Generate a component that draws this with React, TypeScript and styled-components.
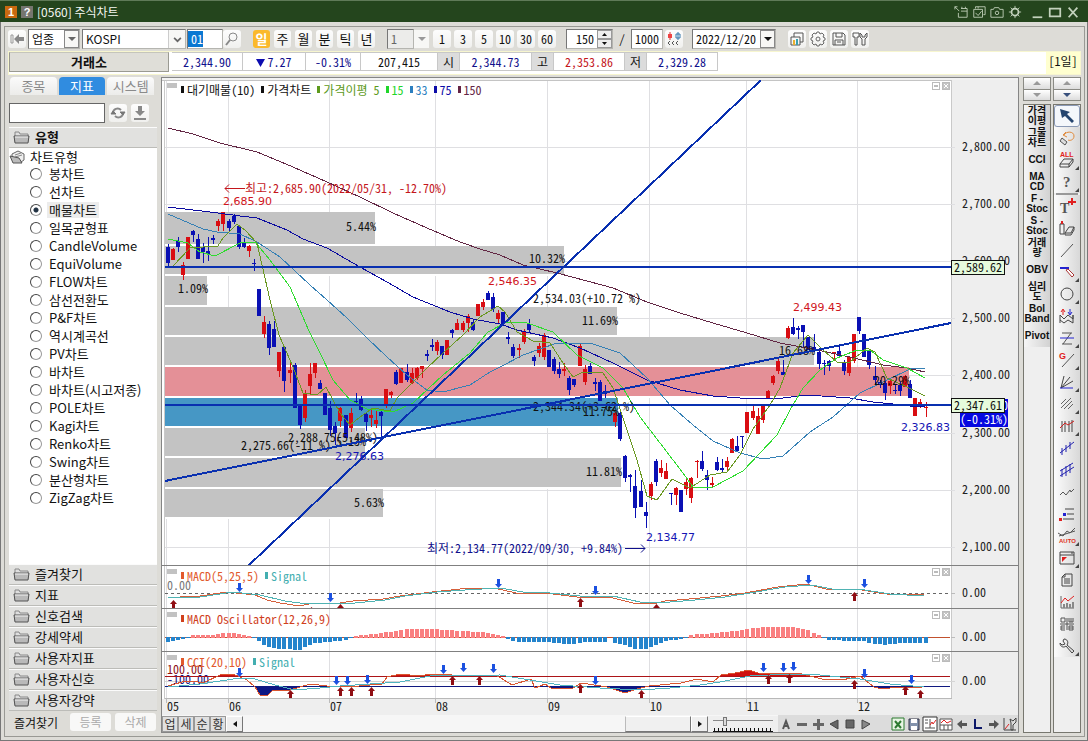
import React from 'react';
import styled, { createGlobalStyle, css } from 'styled-components';

const MONO = '"Noto Sans Mono CJK KR", "Noto Sans CJK KR", monospace';
const SANS = '"Noto Sans CJK KR", "Noto Sans", sans-serif';

const GlobalStyle = createGlobalStyle`
  *, *::before, *::after { box-sizing: border-box; }
  html, body { margin: 0; }
  body { background: #dddcd7; font-family: ${SANS}; font-size: 13px; color: #111; }
  button, input, select { font: inherit; color: inherit; margin: 0; padding: 0; border-radius: 0; }
  button { cursor: pointer; }
`;

/* ---------- window ---------- */

const Window = styled.div`
  min-height: 100vh;
  min-width: 1060px;
  display: flex;
  flex-direction: column;
  background: #dddcd7;
  box-shadow: inset 1px 0 #777, inset -1px -1px #777;
`;

const TitleBar = styled.header`
  height: 22px;
  margin-bottom: 4px;
  padding: 0 8px 0 5px;
  display: flex;
  align-items: center;
  gap: 4px;
  background: #24451d;
  border-top: 1px solid #5f7a58;
  color: #f4f6f2;
`;

const TitleBadge = styled.span<{ $bg: string }>`
  width: 12px;
  height: 12px;
  background: ${(p) => p.$bg};
  color: #fff;
  font: bold 11px/12px "Liberation Sans", sans-serif;
  text-align: center;
`;

const Title = styled.h1`
  flex: 1;
  margin: 0;
  font: 12px/20px ${SANS};
`;

const TitleButton = styled.button`
  width: 14px;
  height: 16px;
  border: 0;
  background: none;
  color: #c3d2bd;
  svg { display: block; width: 14px; height: 14px; }
`;

const TitleGroup = styled.div`
  display: flex;
  gap: 4px;
  margin-left: 4px;
`;

const Client = styled.div`
  flex: 1;
  margin: 0 3px 4px 4px;
  padding: 0 3px 3px;
  border: 1px solid #999994;
  display: flex;
  flex-direction: column;
`;

/* ---------- toolbar ---------- */

const Toolbar = styled.div`
  height: 24px;
  display: flex;
  align-items: center;
  font: 12px/16px ${MONO};
`;

const ButtonGroup = styled.div<{ $gap: number; $left?: number }>`
  display: flex;
  gap: ${(p) => p.$gap}px;
  margin-left: ${(p) => p.$left ?? 0}px;
`;

const ToolButton = styled.button<{ $on?: boolean }>`
  width: 18px;
  height: 18px;
  border: 0;
  border-radius: 3px;
  background: linear-gradient(#fdfdfd, #f0f0ee);
  color: #111;
  font: 12px/18px ${MONO};
  display: flex;
  align-items: center;
  justify-content: center;
  svg { width: 16px; height: 16px; flex: none; }
  ${(p) => p.$on && css`background: #fbb92c; color: #fff; font-weight: bold;`}
`;

const PeriodButton = styled(ToolButton)`
  width: 17px;
  font-size: 13px;
`;

const Field = styled.span<{ $w: number; $left?: number }>`
  width: ${(p) => p.$w}px;
  height: 20px;
  margin-left: ${(p) => p.$left ?? 0}px;
  display: flex;
  align-items: center;
  background: #fff;
  border: 1px solid #777;
  border-right-color: #b5b5b0;
  border-bottom-color: #b5b5b0;
`;

const FieldInput = styled.input<{ $right?: boolean; $marked?: boolean; $sans?: boolean }>`
  flex: 1;
  min-width: 0;
  width: 100%;
  height: 16px;
  padding: 0 3px;
  border: 0;
  outline: 0;
  background: ${(p) => (p.$marked ? 'linear-gradient(to right, #0a78d2 15px, #fff 15px)' : 'none')};
  color: ${(p) => (p.$marked ? '#fff' : '#111')};
  font: 12px/16px ${(p) => (p.$sans ? SANS : MONO)};
  text-align: ${(p) => (p.$right ? 'right' : 'left')};
`;

const PlainSelect = styled.select<{ $muted?: boolean }>`
  flex: 1;
  min-width: 0;
  height: 18px;
  padding: 0 3px;
  border: 0;
  outline: 0;
  appearance: none;
  background: ${(p) => (p.$muted ? '#ececea' : 'none')};
  color: ${(p) => (p.$muted ? '#666' : '#111')};
  font: 12px/16px ${MONO};
`;

const Drop = styled.span<{ $framed?: boolean }>`
  width: 15px;
  height: 18px;
  flex: none;
  display: flex;
  align-items: center;
  justify-content: center;
  background: #f7f7f5;
  border: ${(p) => (p.$framed ? '1px solid #888' : '0')};
  svg { width: 8px; height: 4px; }
`;

const ComboDrop = styled(Drop)`
  width: 17px;
  border-left: 1px solid #ccc;
  svg { width: 9px; height: 9px; }
`;

const Spin = styled.span`
  width: 15px;
  height: 18px;
  display: flex;
  flex-direction: column;
  button {
    flex: 1;
    border: 1px solid #999;
    background: #eee;
    font-size: 0;
    display: flex;
    align-items: center;
    justify-content: center;
  }
  svg { width: 5px; height: 3px; }
`;

const Slash = styled.span`
  width: 18px;
  text-align: center;
`;

/* ---------- quote strip ---------- */

const QuoteStrip = styled.div`
  height: 24px;
  margin-bottom: 2px;
  display: flex;
  background: #fff;
  border: 1px solid #f7f6cf;
  font: 12px/18px ${MONO};
`;

const MarketButton = styled.button`
  width: 160px;
  height: 20px;
  margin-right: 3px;
  border: 1px solid #9a9a92;
  border-top-color: #c5c5bb;
  background: #dfded8;
  font: bold 13px/18px ${SANS};
`;

const QuoteCell = styled.span<{ $w: number; $tone?: string; $label?: boolean }>`
  width: ${(p) => p.$w}px;
  height: 19px;
  border: 1px solid #c8c8c8;
  border-left-width: 0;
  background: ${(p) => (p.$label ? '#dcdcdc' : '#fff')};
  color: ${(p) => p.$tone ?? '#111'};
  text-align: center;
  white-space: nowrap;
  svg { width: 9px; height: 8px; margin-right: 2px; }
`;

const UnitTag = styled.span`
  width: 34px;
  margin-left: auto;
  background: #ffffcf;
  text-align: center;
`;

/* ---------- sidebar ---------- */

const Body = styled.div`
  flex: 1;
  display: flex;
`;

const Sidebar = styled.aside`
  width: 152px;
  flex: none;
  padding: 0 3px 0 1px;
  display: flex;
  flex-direction: column;
`;

const Tabs = styled.div`
  height: 18px;
  display: flex;
  gap: 2px;
  padding: 0 3px 0 1px;
`;

const Tab = styled.button<{ $on?: boolean }>`
  flex: 1;
  border: 0;
  border-radius: 4px 4px 0 0;
  background: ${(p) => (p.$on ? '#308ce0' : 'linear-gradient(#fbfbfb, #ececea)')};
  color: ${(p) => (p.$on ? '#fff' : '#8a8a8a')};
  font: 13px/18px ${SANS};
`;

const SearchRow = styled.div`
  display: flex;
  align-items: center;
  gap: 4px;
  margin: 8px 0 4px;
`;

const SearchInput = styled.input`
  width: 96px;
  height: 20px;
  padding: 0 4px;
  border: 1px solid #666;
  background: #fff;
`;

const GroupHeader = styled.button<{ $bold?: boolean }>`
  height: 21px;
  padding: 0 0 1px 4px;
  display: flex;
  align-items: center;
  gap: 5px;
  border: 0;
  border-top: 1px solid #fbfbfb;
  border-bottom: 1px solid #bcbcb8;
  background: #e1e1df;
  font: ${(p) => (p.$bold ? 'bold' : 'normal')} 13px/18px ${SANS};
  svg { width: 17px; height: 14px; }
`;

const Tree = styled.fieldset`
  flex: 1;
  min-width: 0;
  margin: 0;
  padding: 0;
  border: 0;
  background: #fff;
`;

const TreeRoot = styled.div`
  height: 17px;
  display: flex;
  align-items: center;
  gap: 5px;
  line-height: 18px;
  svg { width: 16px; height: 14px; }
`;

const TreeItem = styled.label`
  height: 18px;
  padding-left: 21px;
  display: flex;
  align-items: center;
  gap: 5px;
  line-height: 18px;
  white-space: nowrap;
`;

const Radio = styled.input`
  appearance: none;
  width: 12px;
  height: 12px;
  border: 1px solid #444;
  border-right-color: #999;
  border-bottom-color: #999;
  border-radius: 50%;
  background: #fff;
  &:checked { background: radial-gradient(#234 0 2px, #fff 3px); }
`;

const ItemText = styled.span<{ $on: boolean }>`
  padding: 0 2px;
  background: ${(p) => (p.$on ? '#ececec' : 'none')};
  line-height: 16px;
`;

const SideFoot = styled.div`
  height: 22px;
  display: flex;
  align-items: center;
  gap: 4px;
  padding: 0 1px 0 5px;
  font-size: 12px;
  span { flex: 1; white-space: nowrap; }
`;

const FootButton = styled.button`
  width: 41px;
  height: 18px;
  border: 0;
  border-radius: 3px;
  background: #f8f8f7;
  color: #aaa;
  font: 12px/18px ${SANS};
`;

/* ---------- chart ---------- */

const ChartFrame = styled.main`
  flex: 1;
  min-width: 0;
  margin: 0 4px 0 1px;
  padding-top: 2px;
  border: 1px solid #858585;
  background: #f2f2f2;
`;

const Pane = styled.section`
  position: relative;
`;

const Plot = styled.svg`
  display: block;
  width: 100%;
  height: auto;
  font: 12px ${MONO};
`;

const PaneTag = styled.span`
  position: absolute;
  left: 5px;
  top: 3px;
  width: 10px;
  height: 5px;
  background: #c2c2c2;
`;

const Legend = styled.div`
  position: absolute;
  left: 19px;
  top: 2px;
  display: flex;
  gap: 6px;
  font: 12px/15px ${MONO};
  white-space: pre;
`;

const LegendItem = styled.span<{ $c: string }>`
  display: flex;
  align-items: center;
  gap: 3px;
  color: ${(p) => p.$c};
  &::before { content: ''; width: 3px; height: 7px; background: ${(p) => p.$c}; }
`;

const PaneButtons = styled.div`
  position: absolute;
  right: 68px;
  top: 2px;
  display: flex;
  gap: 2px;
`;

const PaneButton = styled.button<{ $fill?: boolean }>`
  width: 8px;
  height: 8px;
  border: 1px solid #bbb;
  background: ${(p) => (p.$fill ? '#c4c4c4' : '#fff')};
  svg { display: block; width: 6px; height: 6px; }
`;

const BottomBar = styled.div`
  height: 17px;
  display: flex;
  align-items: center;
  background: #f6f6f6;
`;

const ModeButton = styled.button`
  width: 16px;
  height: 16px;
  border: 1px solid #999;
  background: #e0e0e0;
  color: #333;
  font: 12px/13px ${SANS};
  overflow: hidden;
`;

const ScrollButton = styled.button`
  width: 17px;
  height: 16px;
  border: 1px solid #fff;
  border-right-color: #777;
  border-bottom-color: #777;
  background: #efefef;
  display: flex;
  align-items: center;
  justify-content: center;
  svg { width: 4px; height: 6px; }
`;

const ScrollTrack = styled.div`
  flex: 1;
  height: 16px;
  display: flex;
  justify-content: flex-end;
  &::after {
    content: '';
    width: 66px;
    background: #f0f0f0;
    border: 1px solid #fff;
    border-left-color: #bbb;
    border-right-color: #777;
    border-bottom-color: #777;
  }
`;

const Zoom = styled.label`
  width: 70px;
  height: 16px;
  padding: 1px 5px 0;
  background: #efefef;
  svg { display: block; width: 60px; height: 6px; }
`;

const ZoomRange = styled.input`
  appearance: none;
  display: block;
  width: 60px;
  height: 9px;
  background: linear-gradient(#888, #888) 0 3px / 100% 1px no-repeat;
  &::-webkit-slider-thumb {
    appearance: none;
    width: 4px;
    height: 9px;
    background: #ddd;
    border: 1px solid #777;
  }
`;

const BottomTools = styled.div<{ $end?: boolean }>`
  height: 17px;
  display: flex;
  align-items: center;
  padding-right: ${(p) => (p.$end ? 0 : 16)}px;
  background: #dcdcdc;
`;

const BottomTool = styled.button`
  width: 16px;
  height: 16px;
  border: 0;
  background: none;
  svg { display: block; width: 16px; height: 16px; }
`;

/* ---------- right tool strips ---------- */

const Strip = styled.div`
  width: 28px;
  flex: none;
  display: flex;
  flex-direction: column;
  gap: 3px;
  & + & { margin-left: 2px; }
`;

const StripPager = styled.div`
  height: 24px;
  display: flex;
  flex-direction: column;
  border: 1px solid #8a8a84;
  button {
    flex: 1;
    border: 0;
    background: linear-gradient(#fff, #dcdcdc);
    display: flex;
    align-items: center;
    justify-content: center;
  }
  button + button { border-top: 1px solid #8a8a84; }
  svg { width: 8px; height: 4px; }
`;

const StripList = styled.div`
  flex: 1;
  display: flex;
  flex-direction: column;
  border: 1px solid #77776f;
  background: #efefef;
`;

const StripText = styled.button`
  height: 22px;
  border: 0;
  background: linear-gradient(to right, #f6f6f6, #d2d2d2);
  font: bold 10px/10px "Liberation Sans", ${SANS};
  white-space: pre;
  text-align: center;
`;

const StripIcon = styled.button<{ $on?: boolean }>`
  position: relative;
  height: 22px;
  border: ${(p) => (p.$on ? '1px solid #8a99b5' : '0')};
  border-radius: ${(p) => (p.$on ? 3 : 0)}px;
  background: ${(p) => (p.$on ? '#f4f7fb' : 'linear-gradient(to right, #fcfcfc, #d8d8d8)')};
  display: flex;
  align-items: center;
  justify-content: center;
  svg { width: 18px; height: 18px; }
`;

const Corner = styled.span`
  position: absolute;
  right: 1px;
  bottom: 1px;
  border: 2px solid transparent;
  border-right-color: #444;
  border-bottom-color: #444;
`;

const StripRule = styled.hr`
  width: 22px;
  height: 2px;
  margin: 0 auto;
  border: 0;
  background: #999;
`;

/* ---------- icons ---------- */

const Icon = ({ size = 16, children }: { size?: number; children: React.ReactNode }) => (
  <svg viewBox={`0 0 ${size} ${size}`} fill="none" stroke="currentColor" aria-hidden="true">{children}</svg>
);

const Tri = ({ dir, color = '#111' }: { dir: 'up' | 'down' | 'left' | 'right'; color?: string }) => {
  const d = { up: 'M0 8L4 0L8 8Z', down: 'M0 0H8L4 8Z', left: 'M8 0V8L0 4Z', right: 'M0 0L8 4L0 8Z' }[dir];
  return <svg viewBox="0 0 8 8" preserveAspectRatio="none" aria-hidden="true"><path d={d} fill={color} /></svg>;
};

const Folder = () => (
  <svg viewBox="0 0 17 14" aria-hidden="true">
    <path d="M2 12V2H6L7 4H15V12Z" fill="#dedede" stroke="#888" />
    <path d="M2 13L1 6H16L15 13Z" fill="#b9b9b9" stroke="#555" />
    <path d="M2 7H15" stroke="#f4f4f4" />
  </svg>
);

const OpenFolder = () => (
  <svg viewBox="0 0 16 14" aria-hidden="true">
    <path d="M3 8V4L9 1L15 4V10L12 12Z" fill="#eee" stroke="#666" />
    <path d="M6 5L12 3M6 7L13 5" stroke="#888" />
    <path d="M1 6L10 8L13 13H4Z" fill="#bbb" stroke="#555" />
  </svg>
);

const gear = 'M7 1H9L10 3L12 2L14 4L13 6L15 7V9L13 10L14 12L12 14L10 13L9 15H7L6 13L4 14L2 12L3 10L1 9V7L3 6L2 4L4 2L6 3Z';

/* ---------- chart data (chart units) ---------- */

// x, high, body top, body bottom, low, rising
type Candle = [number, number, number, number, number, 0 | 1];
const candles: Candle[] = [
  [168,244,247,263,267,0],[173,248,249,260,260,1],[178,237,241,247,252,0],[183,262,265,275,280,1],[188,237,237,259,259,1],
  [193,230,231,235,242,0],[198,234,239,259,259,0],[203,243,247,252,263,0],[208,237,251,254,261,0],[213,235,238,240,244,0],
  [218,219,221,226,231,1],[223,212,212,224,231,1],[229,219,221,228,231,0],[234,214,216,222,224,0],[239,225,226,247,249,0],
  [244,238,242,247,248,0],[249,245,246,251,257,1],[254,259,263,264,271,0],[259,289,289,316,316,0],[264,316,322,334,338,1],
  [269,321,324,348,355,0],[274,321,329,347,347,0],[279,352,352,371,377,1],[284,347,347,381,392,0],[290,362,370,373,383,1],
  [295,363,365,408,408,0],[300,406,406,425,429,0],[305,390,393,418,422,1],[310,363,374,386,395,1],[315,363,363,373,378,1],
  [320,380,383,389,389,0],[325,393,393,415,415,0],[330,401,408,430,436,0],[335,422,426,433,445,0],[340,407,408,421,427,1],
  [346,415,415,438,438,0],[351,408,413,428,432,1],[356,393,401,402,404,0],[361,396,399,410,411,0],[366,413,414,422,431,0],
  [371,410,415,418,427,1],[376,410,420,424,428,1],[381,411,412,416,438,0],[386,389,389,404,408,1],[391,391,392,395,398,1],
  [396,370,372,384,385,0],[401,368,368,383,383,1],[407,364,372,380,382,0],[412,368,373,383,384,1],[417,367,368,378,380,1],
  [422,366,366,369,378,1],[427,350,354,356,361,0],[432,339,345,347,351,0],[437,340,342,351,355,1],[442,346,346,355,359,0],
  [447,340,340,355,355,1],[452,329,330,333,338,0],[457,319,323,330,330,1],[463,321,323,330,332,1],[468,314,316,323,332,1],
  [473,320,322,330,331,0],[478,304,304,316,316,1],[483,299,302,307,310,1],[488,291,293,300,300,0],[493,293,297,309,312,0],
  [498,310,313,319,323,1],[503,312,312,324,324,0],[508,332,337,339,344,0],[513,344,347,356,358,0],[519,344,348,350,358,1],
  [524,329,332,342,344,1],[529,319,324,330,332,0],[534,355,357,361,366,0],[539,343,346,353,357,1],[544,333,335,357,360,1],
  [549,350,350,367,367,0],[554,357,359,371,374,0],[559,362,369,374,378,0],[564,363,369,371,376,1],[569,376,378,390,395,0],
  [574,379,379,385,387,0],[580,343,346,366,366,1],[585,365,369,382,385,1],[590,363,366,374,374,0],[595,378,382,384,391,0],
  [600,380,382,401,401,0],[605,385,391,394,398,0],[615,412,413,422,427,1],[620,410,413,439,441,0],
  [625,455,456,478,482,0],[630,474,475,477,492,0],[635,470,486,508,518,0],[641,480,491,507,507,0],[646,502,512,516,528,0],
  [651,482,484,496,500,1],[656,459,461,482,486,0],[661,460,468,473,477,1],[666,463,471,479,479,1],[671,493,493,494,505,0],
  [676,487,488,495,505,1],[681,490,490,512,512,0],[686,478,482,489,495,1],[691,477,478,498,503,1],[697,460,461,462,478,1],
  [702,451,461,469,471,0],[707,470,475,480,490,0],[712,477,483,485,487,1],[717,457,462,470,471,0],[722,459,468,470,472,0],
  [727,457,461,467,471,1],[732,438,439,453,453,1],[737,436,446,451,451,0],[742,436,436,437,448,0],[747,412,412,433,433,1],
  [753,405,411,418,420,1],[758,408,416,434,434,1],[763,405,405,420,423,1],[768,390,391,399,399,1],[773,375,376,383,385,1],
  [778,358,361,371,374,1],[783,360,372,375,375,0],[788,326,328,338,339,1],[793,318,327,334,335,0],[798,326,328,330,339,0],
  [803,325,325,332,348,0],[808,337,337,350,350,0],[814,334,347,350,352,0],[819,348,352,364,369,0],[824,360,363,364,375,0],
  [829,360,361,366,371,0],[834,352,352,354,359,1],[839,346,351,356,356,0],[844,360,362,371,375,0],[849,356,357,373,376,1],
  [854,334,334,361,363,1],[859,317,317,331,334,0],[864,334,334,357,357,0],[869,351,351,365,369,0],[875,366,376,380,385,0],
  [880,380,382,385,388,0],[885,381,383,393,400,0],[890,380,381,386,394,1],[895,385,390,391,394,0],[900,382,385,391,396,0],
  [905,375,376,387,387,1],[910,380,384,398,398,0],[915,398,398,416,416,1],[920,399,402,405,408,1],[926,402,407,408,417,1],
];

const averages: { color: string; points: string }[] = [
  { color: '#622744', points: '168,128 193,134 220,143 257,152 293,167 327,182 360,197 393,213 427,228 460,242 480,249 500,255 523,265 557,273 587,281 613,288 647,302 680,313 713,323 747,333 780,343 817,350 850,357 883,365 907,368 925,372' },
  { color: '#0b0ba0', points: '168,207 210,212 240,216 257,218 287,230 303,239 327,248 360,267 387,282 413,297 450,312 473,319 500,324 517,330 553,338 580,348 613,363 647,380 680,390 713,396 740,398 783,398 807,395 850,398 873,402 893,404 910,406 925,407' },
  { color: '#3580b5', points: '168,214 203,229 217,232 240,234 257,242 280,257 310,285 327,300 347,318 367,338 387,357 407,375 427,390 443,392 470,385 490,372 500,367 523,355 557,343 590,343 620,353 647,378 670,405 693,425 713,441 740,453 763,459 783,456 810,432 833,417 860,393 883,382 910,369 925,368' },
  { color: '#2fdc2f', points: '168,239 188,243 200,252 215,256 240,243 255,242 270,260 290,287 309,331 320,353 333,380 350,400 367,409 393,412 413,403 443,375 470,353 488,332 507,322 527,323 553,332 577,355 603,368 623,388 640,417 660,443 683,473 693,487 713,487 743,471 760,453 777,435 790,410 803,388 820,370 837,358 857,350 870,350 883,360 907,368 925,378' },
  { color: '#699820', points: '173,266 190,248 203,247 218,246 223,238 237,224 245,230 257,243 270,300 279,335 293,367 303,393 317,395 326,387 340,413 350,425 360,417 373,408 390,411 397,398 410,385 427,368 443,353 463,335 480,317 498,306 505,312 517,332 533,341 550,343 563,363 573,377 583,372 603,373 613,388 623,418 637,460 647,496 657,500 672,479 690,488 710,475 727,472 740,455 753,429 770,405 780,388 793,353 808,335 823,350 837,362 850,362 867,348 875,352 887,378 907,387 925,396' },
];

const volumeBands: { y: number; end: number; label: string; color?: string; labelY?: number; h?: number }[] = [
  { y: 212, end: 375, label: '5.44%', h: 32, labelY: 231 },
  { y: 246, end: 564, label: '10.32%', labelY: 263 },
  { y: 276, end: 207, label: '1.09%', h: 29, labelY: 293 },
  { y: 307, end: 617, label: '11.69%' },
  { y: 337, end: 814, label: '16.68%' },
  { y: 367, end: 909, label: '20.29%', color: '#e49097', h: 29 },
  { y: 398, end: 618, label: '11.75%', color: '#4697c5' },
  { y: 428, end: 365, label: '5.13%' },
  { y: 458, end: 621, label: '11.81%', h: 29 },
  { y: 489, end: 383, label: '5.63%' },
];

const months: [number, string][] = [[166, '05'], [228, '06'], [329, '07'], [435, '08'], [547, '09'], [649, '10'], [746, '11'], [857, '12']];
const prices = [2800, 2700, 2600, 2500, 2400, 2300, 2200, 2100];

const oscillator: [number, number][] = [
  [168,-4],[178,-2],[185,-1],[192,2],[210,2],[225,4],[235,4],[250,1],[256,-1],[262,-6],[272,-10],[285,-11],[300,-12],[305,-9],[315,-5],
  [330,-4],[345,-2],[355,1],[375,3],[395,6],[410,8],[435,8],[460,6],[480,5],[500,2],[507,-1],[515,-4],[545,-4],[570,-6],[590,-4],[610,-4],
  [625,-7],[635,-11],[648,-11],[658,-6],[670,-2],[685,-1],[690,2],[715,4],[735,6],[750,9],[775,10],[795,10],[810,6],[822,1],[828,-2],
  [850,-3],[862,-3],[870,-5],[885,-7],[900,-5],[926,-5],
];

const oscillatorAt = (x: number) => {
  const i = Math.max(1, oscillator.findIndex(([px]) => px >= x));
  const [x0, v0] = oscillator[i - 1];
  const [x1, v1] = oscillator[i];
  return Math.round(v0 + ((v1 - v0) * (x - x0)) / (x1 - x0));
};

const macd = '168,598 180,597 200,596 227,592 255,595 267,600 280,603 300,606 313,603 340,603 353,601 383,599 400,596 432,592 460,589 494,588 516,593 545,593 577,597 609,597 633,603 653,604 665,601 689,599 721,596 745,593 778,587 806,584 826,589 862,590 886,594 924,595';
const macdSignal = '168,598 200,597 233,592 260,595 285,601 307,604 325,603 345,604 385,600 405,596 437,592 465,590 500,588 523,592 550,593 580,596 613,596 640,602 658,603 695,600 725,597 750,593 785,587 812,585 832,589 865,590 890,594 924,596';
const cci = '168,686 182,682 193,681 203,683 220,675 233,674 247,680 255,687 260,695 267,696 273,690 290,690 310,684 327,686 347,687 382,684 387,677 400,674 420,676 430,674 452,675 496,675 512,685 531,679 535,688 545,684 551,688 573,688 581,683 607,687 625,693 637,689 649,686 681,683 697,679 713,682 721,675 735,673 749,670 758,673 802,674 822,679 842,680 860,676 874,687 882,689 898,687 922,688';
const cciSignal = '168,687 200,684 240,678 255,679 275,685 295,690 320,688 340,686 370,684 400,682 430,676 500,675 530,680 560,685 600,688 640,690 670,688 700,685 720,682 750,676 790,674 820,675 860,679 890,684 924,687';

type Marks = { down: [number, number][]; up: [number, number][] };
const macdMarks: Marks = {
  down: [[239,588],[330,598],[498,584],[595,591],[808,580],[864,584]],
  up: [[173,604],[311,611],[340,608],[580,602],[656,608],[854,596]],
};
const cciMarks: Marks = {
  down: [[239,673],[336,681],[347,681],[367,680],[443,670],[463,668],[493,669],[595,681],[763,668],[783,668],[793,667],[864,674],[911,680]],
  up: [[290,694],[340,691],[351,691],[371,691],[452,680],[479,680],[580,688],[641,694],[768,679],[789,678],[854,684],[905,690],[920,694]],
};

/* ---------- chart parts ---------- */

const LEFT = 162;
const WIDTH = 856;
const EDGE = 951;

const Backdrop = ({ y, h }: { y: number; h: number }) => (
  <g shapeRendering="crispEdges">
    <rect x={LEFT} y={y} width={EDGE - LEFT} height={h} fill="#fff" />
    <rect x={EDGE} y={y} width="67" height={h} fill="#eeeeee" />
    {months.map(([x]) => <rect key={x} x={x} y={y} width="1" height={h} fill="#dfdfe2" />)}
    <rect x={EDGE} y={y} width="1" height={h} fill="#c9c9c9" />
    <rect x="164" y={y} width="1" height={h} fill="#c9c9c9" />
  </g>
);

const Rule = ({ y }: { y: number }) => <rect x={LEFT} y={y} width={WIDTH} height="1" fill="#808080" shapeRendering="crispEdges" />;

const SignalMarks = ({ down, up }: Marks) => (
  <g>
    {down.map(([x, y]) => <path key={`d${x}`} d={`M${x - 1} ${y - 5}h3v5h2l-3.5 4l-3.5-4h2z`} fill="#1b50e0" />)}
    {up.map(([x, y]) => <path key={`u${x}`} d={`M${x - 1} ${y + 5}h3v-5h2l-3.5-4l-3.5 4h2z`} fill="#8f0d12" />)}
  </g>
);

const PaneChrome = ({ items }: { items: [string, string][] }) => (
  <>
    <PaneTag />
    <Legend>{items.map(([c, t]) => <LegendItem key={t} $c={c}>{t}</LegendItem>)}</Legend>
    <PaneButtons>
      <PaneButton aria-label="Restore pane"><svg viewBox="0 0 6 6" aria-hidden="true"><rect x="1" y="2" width="4" height="2" fill="#bbb" /></svg></PaneButton>
      <PaneButton $fill aria-label="Close pane"><svg viewBox="0 0 6 6" aria-hidden="true"><path d="M1 1L5 5M5 1L1 5" stroke="#fff" /></svg></PaneButton>
    </PaneButtons>
  </>
);

const PriceTag = ({ y, text }: { y: number; text: string }) => (
  <g>
    <rect x="951.5" y={y - 6.5} width="53" height="14" fill="#e6fbdc" stroke="#111" />
    <text x="954" y={y + 5} fill="#111">{text}</text>
  </g>
);

const PricePane = () => (
  <Pane>
    <Plot viewBox={`${LEFT} 80 ${WIDTH} 486`} role="img" aria-label="KOSPI price chart">
      <Backdrop y={80} h={486} />
      <g shapeRendering="crispEdges">
        <rect x={LEFT} y="80" width={EDGE - LEFT} height="1" fill="#c4c4c4" />
        {prices.map((p, i) => <rect key={p} x="165" y={Math.round(147 + i * 57.1)} width="790" height="1" fill="#dfdfe2" />)}
        {volumeBands.map((b) => <rect key={b.y} x="165" y={b.y} width={b.end - 165} height={b.h ?? 28} fill={b.color ?? '#c3c3c3'} />)}
        {volumeBands.map((b) => <rect key={b.y} x="165" y={b.y + (b.h ?? 28)} width={b.end - 165} height="2" fill="#fff" />)}
      </g>
      <g shapeRendering="crispEdges">
        {candles.map(([x, hi, top, bot, lo, rising]) => (
          <g key={x} fill={rising ? '#d90d12' : '#0a10b4'}>
            <rect x={x} y={hi} width="1" height={Math.max(1, lo - hi)} />
            <rect x={x - 2} y={top} width="4" height={Math.max(1, bot - top)} />
          </g>
        ))}
      </g>
      <g fill="none" strokeWidth="1" shapeRendering="crispEdges">
        {averages.map((a) => <polyline key={a.color} points={a.points} stroke={a.color} />)}
      </g>
      <g fill="#111" textAnchor="end">
        {volumeBands.map((b) => <text key={b.y} x={b.end + 1} y={b.labelY ?? b.y + 18}>{b.label}</text>)}
      </g>
      <g fill="#111">
        <text x="533" y="303">2,534.03(+10.72 %)</text>
        <text x="533" y="411">2,344.34(+3.62 %)</text>
        <text x="288" y="442">2,288.75(5.48%)</text>
        <text x="241" y="450">2,275.66(-11 %)</text>
      </g>
      <g stroke="#0930b0" strokeWidth="2" shapeRendering="crispEdges">
        <path d="M165 267H951M165 405H951" />
        <path d="M165 481L951 323M248 566L761 80" />
      </g>
      <text x="245" y="193" fill="#c4161c">최고:2,685.90(2022/05/31, -12.70%)</text>
      <path d="M245 188.5H225M229 184.5L225 188.5L229 192.5" fill="none" stroke="#c4161c" />
      <text x="427" y="553" fill="#10108c">최저:2,134.77(2022/09/30, +9.84%)</text>
      <path d="M625 548.5H645M641 544.5L645 548.5L641 552.5" fill="none" stroke="#10108c" />
      <g fontFamily="DejaVu Sans" fontSize="11">
        <g fill="#d0151c">
          <text x="223" y="205">2,685.90</text>
          <text x="488" y="285">2,546.35</text>
          <text x="793" y="311">2,499.43</text>
        </g>
        <g fill="#1414b4">
          <text x="335" y="460">2,276.63</text>
          <text x="646" y="541">2,134.77</text>
          <text x="901" y="431">2,326.83</text>
        </g>
      </g>
      <g fill="#222">
        {prices.map((p, i) => <text key={p} x="962" y={Math.round(151 + i * 57.1)}>{p.toLocaleString('en-US')}.00</text>)}
      </g>
      <rect x="960" y="399" width="48" height="28" fill="#0508e0" />
      <text x="960" y="424" fill="#fff">(-0.31%)</text>
      <text x="1002" y="410" fill="#fff">0</text>
      <PriceTag y={267} text="2,589.62" />
      <PriceTag y={405} text="2,347.61" />
      <Rule y={565} />
    </Plot>
    <PaneChrome items={[['#111', '대기매물(10)'], ['#111', '가격차트'], ['#5d9a1c', '가격이평 5'], ['#1fd62a', '15'], ['#2c7fc0', '33'], ['#0c0ca8', '75'], ['#642444', '150']]} />
  </Pane>
);

const MacdPane = () => (
  <Pane>
    <Plot viewBox={`${LEFT} 566 ${WIDTH} 43`} role="img" aria-label="MACD">
      <Backdrop y={566} h={43} />
      <text x="167" y="590" fill="#777">0.00</text>
      <path d="M165 593.5H951" stroke="#666" strokeDasharray="3 3" />
      <path d="M951 593.5H955" stroke="#bbb" />
      <g fill="none" shapeRendering="crispEdges">
        <polyline points={macd} stroke="#d5603c" />
        <polyline points={macdSignal} stroke="#4fb3b3" />
      </g>
      <SignalMarks {...macdMarks} />
      <text x="962" y="597" fill="#222">0.00</text>
      <Rule y={608} />
    </Plot>
    <PaneChrome items={[['#e2592c', 'MACD(5,25,5)'], ['#43aeb0', 'Signal']]} />
  </Pane>
);

const OscillatorPane = () => (
  <Pane>
    <Plot viewBox={`${LEFT} 609 ${WIDTH} 43`} role="img" aria-label="MACD Oscillator">
      <Backdrop y={609} h={43} />
      <rect x="165" y="637" width="785" height="1" fill="#c2512e" shapeRendering="crispEdges" />
      <g shapeRendering="crispEdges">
        {candles.map(([x]) => {
          const v = oscillatorAt(x);
          return <rect key={x} x={x - 2} y={v > 0 ? 637 - v : 637} width="4" height={Math.abs(v) + 1} fill={v > 0 ? '#fa7f80' : '#2484cc'} />;
        })}
      </g>
      <path d="M951 637.5H955" stroke="#bbb" />
      <text x="962" y="641" fill="#222">0.00</text>
      <Rule y={651} />
    </Plot>
    <PaneChrome items={[['#d0401c', 'MACD Oscillator(12,26,9)']]} />
  </Pane>
);

const CciPane = () => (
  <Pane>
    <Plot viewBox={`${LEFT} 652 ${WIDTH} 63`} role="img" aria-label="CCI">
      <defs>
        <clipPath id="above"><rect x="165" y="652" width="786" height="24" /></clipPath>
        <clipPath id="below"><rect x="165" y="687" width="786" height="12" /></clipPath>
      </defs>
      <Backdrop y={652} h={47} />
      <path d="M165 681.5H955" stroke="#d5d5d5" />
      <text x="167" y="674" fill="#8c1016">100.00</text>
      <text x="167" y="684" fill="#10107c">-100.00</text>
      <path d={`M168 681L${cci.split(' ').join('L')}L922 681Z`} fill="#cf1210" clipPath="url(#above)" />
      <path d={`M168 681L${cci.split(' ').join('L')}L922 681Z`} fill="#0c1684" clipPath="url(#below)" />
      <path d="M165 676.5H950" stroke="#ac1418" />
      <path d="M165 686.5H950" stroke="#101880" />
      <g fill="none" shapeRendering="crispEdges">
        <polyline points={cci} stroke="#d9552f" />
        <polyline points={cciSignal} stroke="#50b4c0" />
      </g>
      <SignalMarks {...cciMarks} />
      <text x="962" y="685" fill="#222">0.00</text>
      <rect x={LEFT} y="699" width={WIDTH} height="16" fill="#eeeeee" />
      <rect x="165" y="698" width="787" height="1" fill="#b8b8b8" />
      {months.map(([x, m]) => (
        <g key={m}>
          <rect x={x} y="699" width="1" height="4" fill="#bbb" />
          <text x={x + 1} y="711" fill="#222">{m}</text>
        </g>
      ))}
    </Plot>
    <PaneChrome items={[['#e2592c', 'CCI(20,10)'], ['#43aeb0', 'Signal']]} />
  </Pane>
);

/* ---------- strips ---------- */

const indicatorButtons = ['가격\n이평', '그물\n차트', 'CCI', 'MA\nCD', 'F -\nStoc', 'S -\nStoc', '거래\n량', 'OBV', '심리\n도', 'Bol\nBand', 'Pivot'];

type DrawTool = { name: string; more?: boolean; on?: boolean; rule?: boolean; art: React.ReactNode };
const drawTools: DrawTool[] = [
  { name: 'Select', on: true, art: <path d="M2 2L4 11L7 9L14 16L16 14L9 7L12 5Z" fill="#25456f" stroke="none" /> },
  { name: 'Undo erase', art: <><path d="M8 3L5 6L9 8M6 6C8 2 16 2 16 7C16 11 12 12 10 11" stroke="#e08a3c" /><path d="M2 12L4 9L9 13L7 16Z" stroke="#555" fill="#ddd" /></> },
  { name: 'Erase all', more: true, art: <><text x="2" y="6" fontSize="7" fontWeight="bold" fontFamily="Liberation Sans" fill="#e02020" stroke="none">ALL</text><path d="M2 13L6 8H15L11 13ZM2 13V16H11V13M11 16L15 11V8" stroke="#444" /></> },
  { name: 'Help', more: true, rule: true, art: <text x="5" y="14" fontSize="15" fontWeight="bold" fontFamily="Liberation Serif" fill="#555" stroke="none">?</text> },
  { name: 'Text', art: <><text x="2" y="16" fontSize="14" fontWeight="bold" fontFamily="Liberation Serif" fill="#555" stroke="none">T</text><path d="M14 1V8M10 5H18" stroke="#e02020" strokeWidth="2" /></> },
  { name: 'Marker', art: <><path d="M2 5H6V15H2ZM3 5L4 2L5 5M7 14L11 8H16L13 14ZM7 14V16H13L16 11V8" stroke="#444" /><path d="M4 2V5" stroke="#e02020" strokeWidth="2" /></> },
  { name: 'Trend line', art: <path d="M3 16L15 3" stroke="#555" /> },
  { name: 'Horizontal line', more: true, art: <><path d="M2 5H11" stroke="#2222d0" strokeWidth="2" /><path d="M8 7L10 6L16 12L14 14Z" stroke="#a33" fill="#fff" /></> },
  { name: 'Ellipse', more: true, art: <circle cx="9" cy="9" r="6" stroke="#444" /> },
  { name: 'Wave', art: <><path d="M2 16V8L6 12L10 8L15 12V8V16L10 13L6 16L2 13" stroke="#444" /><path d="M5 8V3M3 5L5 2L7 5" stroke="#e02020" /><path d="M12 2V7M10 5L12 8L14 5" stroke="#2222d0" /></> },
  { name: 'Retracement', more: true, art: <><path d="M4 4H14M4 15H14M13 4L5 15" stroke="#555" /><path d="M2 9H16" stroke="#2222d0" /></> },
  { name: 'Gann line', more: true, art: <><text x="1" y="8" fontSize="9" fontWeight="bold" fontFamily="Liberation Sans" fill="#e02020" stroke="none">G</text><path d="M4 16L16 3" stroke="#555" /></> },
  { name: 'Fan', more: true, art: <><path d="M3 15L6 3M3 15L12 4M3 15L15 8" stroke="#444" /><path d="M2 15H15" stroke="#2222d0" /></> },
  { name: 'Channel', more: true, art: <path d="M3 9L8 4M3 13L13 3M6 14L14 6M10 14L15 9" stroke="#666" /> },
  { name: 'Time zones', more: true, art: <><path d="M4 4V15M7 4V15M11 4V15M14 3V15" stroke="#444" /><path d="M2 11L7 6L10 8L16 4" stroke="#d02020" /></> },
  { name: 'Parallel lines', art: <path d="M2 14L16 3M4 9V16M8 6V13M12 3V10" stroke="#2222b0" /> },
  { name: 'Pitchfork', art: <path d="M2 10L15 2M2 15L16 6M4 8V16M8 5V15M12 3V12" stroke="#2222b0" /> },
  { name: 'Zigzag', art: <path d="M2 12L5 9L8 12L12 7L13 9L16 6" stroke="#555" /> },
  { name: 'Levels', art: <><path d="M7 4H16M9 9H16M5 14H16" stroke="#444" /><path d="M5 8h3v3h-3z" fill="#2222d0" stroke="none" /><path d="M1 13h3v3h-3z" fill="#e02020" stroke="none" /></> },
  { name: 'Auto trend', more: true, art: <><path d="M0 6L5 9L9 4L12 6L17 1M1 9L17 4" stroke="#555" /><text x="1" y="16" fontSize="6" fontWeight="bold" fontFamily="Liberation Sans" fill="#e03020" stroke="none">AUTO</text></> },
  { name: 'Window', more: true, art: <><path d="M2 3H16V15H2ZM2 6H16M13 4H15" stroke="#444" /><path d="M4 8H9L4 13Z" fill="#e02020" stroke="none" /></> },
  { name: 'Report', art: <path d="M7 3H14V15H4V6ZM7 3V6H4M6 8H12M6 10H12M6 12H12" stroke="#444" /> },
  { name: 'Bar chart', art: <><path d="M3 3V15H16" stroke="#666" /><path d="M6 11V15M9 10V15M12 11V15M15 9V15" stroke="#888" strokeWidth="2" /><path d="M3 10L7 5L10 8L16 3" stroke="#e02020" /></> },
  { name: 'Period split', art: <path d="M3 3H7V7H3ZM9 3V15M2 9H16M11 3V7H15V3M13 3V7M7 11H3V15H7M3 13H7M11 15V11H15V15H11M11 13H15" stroke="#555" /> },
  { name: 'Settings', more: true, art: <path d="M6 2L5 4L7 7L4 8L2 6C2 10 6 11 8 9L14 16L16 14L9 8C11 5 9 2 6 2Z" stroke="#444" /> },
];

const chartTypes = ['봉차트', '선차트', '매물차트', '일목균형표', 'CandleVolume', 'EquiVolume', 'FLOW차트', '삼선전환도', 'P&F차트', '역시계곡선', 'PV차트', '바차트', '바차트(시고저종)', 'POLE차트', 'Kagi차트', 'Renko차트', 'Swing차트', '분산형차트', 'ZigZag차트'];
const groups = ['즐겨찾기', '지표', '신호검색', '강세약세', '사용자지표', '사용자신호', '사용자강약'];

const playTools: [string, React.ReactNode][] = [
  ['Auto', <path d="M5 13L8 5L11 13M6 10H10" stroke="#555" strokeWidth="2" />],
  ['Zoom out', <path d="M3 7H13V10H3Z" fill="#666" stroke="none" />],
  ['Zoom in', <path d="M3 7H7V3H10V7H14V10H10V14H7V10H3Z" fill="#666" stroke="none" />],
  ['Step back', <path d="M12 4V13L4 8Z" fill="#666" stroke="#444" />],
  ['Stop', <path d="M4 4H12V12H4Z" fill="#666" stroke="#444" />],
  ['Play', <path d="M4 4V13L12 8Z" fill="#888" stroke="#444" />],
];
const fileTools: [string, React.ReactNode][] = [
  ['Export to Excel', <><path d="M2 2H14V14H2Z" fill="#e8f5e4" stroke="#2c7a30" /><path d="M5 5L11 12M11 5L5 12" stroke="#2c7a30" strokeWidth="2" /></>],
  ['Save', <><path d="M3 3H13V14H3Z" fill="#8292ac" stroke="#334" /><path d="M5 3H11V7H5ZM5 10H11V14H5Z" fill="#fff" stroke="none" /></>],
  ['Chart view', <><path d="M1 1H15V15H1Z" fill="#fff" stroke="#333" /><path d="M3 4H6M3 7H6M3 12H13M8 3V12" stroke="#555" /><path d="M8 9L10 6L11 8L14 4" stroke="#d22" /></>],
  ['Split view', <><path d="M2 3H14V14H2ZM2 9H14M6 9V14M10 9V14" fill="#fff" stroke="#555" /><path d="M3 7L6 4L9 7L13 5" stroke="#d22" /></>],
  ['Previous', <path d="M3 8L8 4V7H13V10H8V13Z" fill="#555" stroke="none" />],
  ['Lock', <path d="M5 3V12H12" stroke="#0c1868" strokeWidth="2" />],
  ['Next', <path d="M13 8L8 4V7H3V10H8V13Z" fill="#555" stroke="none" />],
  ['Chart settings', <><path d="M2 2V14H14M8 3L11 5L14 2V6L11 9V14H9V7Z" stroke="#444" /><path d="M3 13L7 8" stroke="#d22" /></>],
];

const Pager = ({ dark }: { dark?: boolean }) => (
  <StripPager>
    <button aria-label="Scroll up"><Tri dir="up" color="#999" /></button>
    <button aria-label="Scroll down"><Tri dir="down" color={dark ? '#38507c' : '#999'} /></button>
  </StripPager>
);

export default function App() {
  const [chartType, setChartType] = React.useState('매물차트');
  return (
    <>
      <GlobalStyle />
      <Window>
        <TitleBar>
          <TitleBadge $bg="#c96a10">1</TitleBadge>
          <TitleBadge $bg="#76766f">?</TitleBadge>
          <Title>[0560] 주식차트</Title>
          <TitleGroup>
            <TitleButton aria-label="Detach"><Icon><path d="M1 2L6 7M1 2H4M1 2V5M8 4H15V14H5V9M9 4V2M13 4V2M8 7H15" /></Icon></TitleButton>
            <TitleButton aria-label="Copy screen"><Icon><path d="M4 4V2H15V11H13M7 2V4M2 5H12V14H2ZM4 9L7 12L11 7" /></Icon></TitleButton>
            <TitleButton aria-label="Capture"><Icon><path d="M1 5H4L5 3H10L11 5H15V14H1Z" /><circle cx="8" cy="9" r="2" /></Icon></TitleButton>
            <TitleButton aria-label="Options"><Icon><circle cx="8" cy="8" r="4" strokeWidth="2" /><path d="M8 1V4M8 12V15M1 8H4M12 8H15M3 3L5 5M11 11L13 13M13 3L11 5M5 11L3 13" /></Icon></TitleButton>
          </TitleGroup>
          <TitleGroup>
            <TitleButton aria-label="Minimize"><Icon><path d="M3 14H14" strokeWidth="2" /></Icon></TitleButton>
            <TitleButton aria-label="Maximize"><Icon><path d="M2 4H14V13H2Z" strokeWidth="2" /></Icon></TitleButton>
            <TitleButton aria-label="Close"><Icon><path d="M3 3L13 14M13 3L3 14" strokeWidth="2" /></Icon></TitleButton>
          </TitleGroup>
        </TitleBar>

        <Client>
          <Toolbar>
            <ToolButton aria-label="Back"><Icon><path d="M2 4H4V12H2Z" stroke="#999" /><path d="M5 8L10 3V6H15V10H10V13Z" fill="#888" stroke="none" /></Icon></ToolButton>
            <Field $w={52} $left={2}>
              <PlainSelect aria-label="Category"><option>업종</option></PlainSelect>
              <Drop $framed><Tri dir="down" color="#666" /></Drop>
            </Field>
            <Field $w={104} $left={2}>
              <FieldInput $sans aria-label="Index name" defaultValue="KOSPI" />
              <ComboDrop><Icon><path d="M2 5L8 11L14 5" stroke="#666" strokeWidth="3" /></Icon></ComboDrop>
            </Field>
            <Field $w={36} $left={1}><FieldInput $marked aria-label="Index code" defaultValue="01" /></Field>
            <ToolButton aria-label="Search"><Icon><circle cx="9" cy="6" r="4" stroke="#888" /><path d="M6 9L2 14" stroke="#888" strokeWidth="2" /></Icon></ToolButton>
            <ButtonGroup $gap={4} $left={12}>
              {['일', '주', '월', '분', '틱', '년'].map((p, i) => <PeriodButton key={p} $on={i === 0}>{p}</PeriodButton>)}
            </ButtonGroup>
            <Field $w={27} $left={12}>
              <PlainSelect $muted aria-label="Interval"><option>1</option></PlainSelect>
            </Field>
            <Drop><Tri dir="down" color="#999" /></Drop>
            <ButtonGroup $gap={3} $left={4}>
              {['1', '3', '5', '10', '30', '60'].map((p) => <ToolButton key={p}>{p}</ToolButton>)}
            </ButtonGroup>
            <Field $w={47} $left={10}>
              <FieldInput $right aria-label="Visible bars" defaultValue="150" />
              <Spin>
                <button aria-label="More bars"><Tri dir="up" /></button>
                <button aria-label="Fewer bars"><Tri dir="down" /></button>
              </Spin>
            </Field>
            <Slash>/</Slash>
            <Field $w={32}><FieldInput aria-label="Total bars" defaultValue="1000" /></Field>
            <ButtonGroup $gap={3} $left={2}>
              <ToolButton aria-label="Candles"><Icon><path d="M4 1V9" stroke="#d33" /><path d="M2 3H6V7H2Z" fill="#e44" stroke="none" /><path d="M12 1V9M10 3H14V7H10Z" stroke="#37a" fill="#fff" /><path d="M4 10L2 12L4 14M8 10L6 12L8 14M12 10L10 12L12 14" stroke="#555" /></Icon></ToolButton>
            </ButtonGroup>
            <Field $w={84} $left={9}>
              <FieldInput aria-label="Date" defaultValue="2022/12/20" />
              <Drop $framed><Tri dir="down" /></Drop>
            </Field>
            <ButtonGroup $gap={3} $left={12}>
              <ToolButton aria-label="Chart layout"><Icon><path d="M5 6V2H14V11H11M2 6H11V14H2Z" stroke="#555" /><path d="M5 9V14" stroke="#e8b030" strokeWidth="2" /><path d="M8 8V14" stroke="#3aa0b0" strokeWidth="2" /></Icon></ToolButton>
              <ToolButton aria-label="Settings"><Icon><path d={gear} stroke="#666" /><circle cx="8" cy="8" r="2" stroke="#666" /></Icon></ToolButton>
              <ToolButton aria-label="Save"><Icon><path d="M2 2H12L14 4V14H2ZM5 2V6H11V2M4 14V9H12V14M6 11H10" stroke="#555" /></Icon></ToolButton>
              <ToolButton aria-label="Tools"><Icon><path d="M1 2H7V6H5V14H3V6H1ZM8 2V6L10 8V14H13V8L15 6V2L13 4V6H10V4Z" stroke="#555" /></Icon></ToolButton>
            </ButtonGroup>
          </Toolbar>

          <QuoteStrip>
            <MarketButton>거래소</MarketButton>
            <QuoteCell $w={71} $tone="#10108c">2,344.90</QuoteCell>
            <QuoteCell $w={63} $tone="#10108c"><Tri dir="down" color="#0c0cb0" />7.27</QuoteCell>
            <QuoteCell $w={55} $tone="#10108c">-0.31%</QuoteCell>
            <QuoteCell $w={77}>207,415</QuoteCell>
            <QuoteCell $w={22} $label>시</QuoteCell>
            <QuoteCell $w={72} $tone="#10108c">2,344.73</QuoteCell>
            <QuoteCell $w={22} $label>고</QuoteCell>
            <QuoteCell $w={71} $tone="#c4161c">2,353.86</QuoteCell>
            <QuoteCell $w={22} $label>저</QuoteCell>
            <QuoteCell $w={71} $tone="#10108c">2,329.28</QuoteCell>
            <UnitTag>[1일]</UnitTag>
          </QuoteStrip>

          <Body>
            <Sidebar>
              <Tabs>
                <Tab>종목</Tab>
                <Tab $on>지표</Tab>
                <Tab>시스템</Tab>
              </Tabs>
              <SearchRow>
                <SearchInput aria-label="Search indicators" />
                <ToolButton aria-label="Refresh"><Icon><path d="M3 8C3 4 8 2 11 5M13 8C13 12 8 14 5 11" stroke="#888" strokeWidth="2" /><path d="M10 7H15L13 10ZM1 9L3 6L6 9Z" fill="#777" stroke="#777" /></Icon></ToolButton>
                <ToolButton aria-label="Download"><Icon><path d="M6 1H10V6H13L8 11L3 6H6ZM2 13H14V15H2Z" fill="#888" stroke="none" /></Icon></ToolButton>
              </SearchRow>
              <GroupHeader $bold><Folder />유형</GroupHeader>
              <Tree aria-label="차트유형">
                <TreeRoot><OpenFolder />차트유형</TreeRoot>
                {chartTypes.map((t) => (
                  <TreeItem key={t}>
                    <Radio type="radio" name="chartType" checked={t === chartType} onChange={() => setChartType(t)} />
                    <ItemText $on={t === chartType}>{t}</ItemText>
                  </TreeItem>
                ))}
              </Tree>
              {groups.map((g) => <GroupHeader key={g}><Folder />{g}</GroupHeader>)}
              <SideFoot>
                <span>즐겨찾기</span>
                <FootButton>등록</FootButton>
                <FootButton>삭제</FootButton>
              </SideFoot>
            </Sidebar>

            <ChartFrame>
              <PricePane />
              <MacdPane />
              <OscillatorPane />
              <CciPane />
              <BottomBar>
                {['업', '세', '순', '황'].map((m) => <ModeButton key={m}>{m}</ModeButton>)}
                <ScrollButton aria-label="Scroll left"><Tri dir="left" /></ScrollButton>
                <ScrollTrack />
                <ScrollButton aria-label="Scroll right"><Tri dir="right" /></ScrollButton>
                <Zoom>
                  <ZoomRange type="range" aria-label="Zoom" min="0" max="100" defaultValue="18" />
                  <svg viewBox="0 0 60 6" aria-hidden="true"><path d="M0 5.5H60" stroke="#111" /><path d="M1 4H60" stroke="#111" strokeWidth="4" strokeDasharray="1 3" /></svg>
                </Zoom>
                <BottomTools>
                  {playTools.map(([n, art]) => <BottomTool key={n} aria-label={n}><Icon>{art}</Icon></BottomTool>)}
                </BottomTools>
                <BottomTools $end>
                  {fileTools.map(([n, art]) => <BottomTool key={n} aria-label={n}><Icon>{art}</Icon></BottomTool>)}
                </BottomTools>
              </BottomBar>
            </ChartFrame>

            <Strip>
              <Pager />
              <StripList>
                {indicatorButtons.map((t) => <StripText key={t}>{t}</StripText>)}
              </StripList>
            </Strip>
            <Strip>
              <Pager dark />
              <StripList>
                {drawTools.map((t) => (
                  <React.Fragment key={t.name}>
                    <StripIcon aria-label={t.name} $on={t.on}>
                      <Icon size={18}>{t.art}</Icon>
                      {t.more && <Corner />}
                    </StripIcon>
                    {t.rule && <StripRule />}
                  </React.Fragment>
                ))}
              </StripList>
            </Strip>
          </Body>
        </Client>
      </Window>
    </>
  );
}
